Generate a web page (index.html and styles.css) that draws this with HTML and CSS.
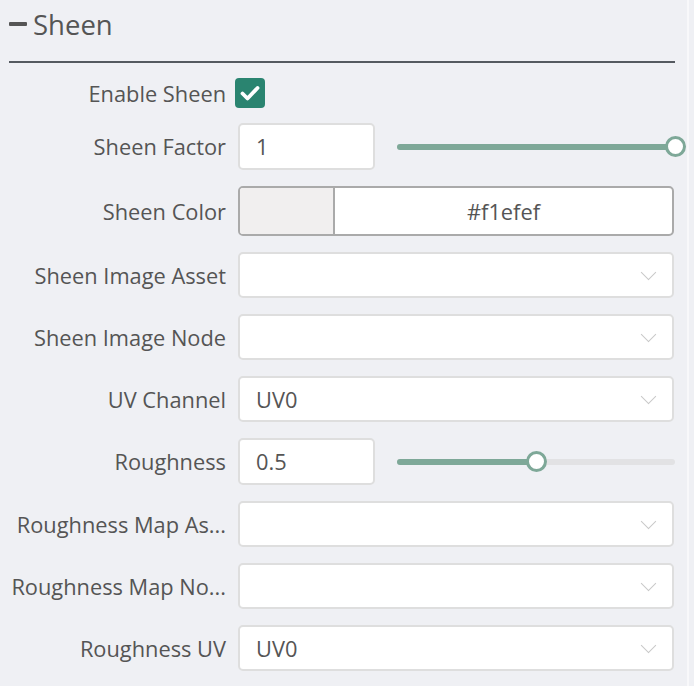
FILE: index.html
```html
<!DOCTYPE html>
<html lang="en">
<head>
  <meta charset="UTF-8">
  <title>Sheen</title>
  <link rel="stylesheet" href="styles.css">
</head>
<body>
  <div class="panel">
    <div class="section-head">
      <span class="collapse"></span>
      <h2>Sheen</h2>
    </div>

    <div class="fields">
      <label class="fld-label enable">Enable Sheen</label>
      <div class="ctl enable">
        <span class="check">
          <svg width="20" height="16" viewBox="0 0 20 16"><path d="M2.5 8.5l5 5L17.5 3" fill="none" stroke="#fff" stroke-width="3.8" stroke-linecap="round" stroke-linejoin="round"/></svg>
        </span>
      </div>

      <label class="fld-label">Sheen Factor</label>
      <div class="ctl num-slider">
        <div class="num-box">1</div>
        <div class="slider">
          <div class="track"></div>
          <div class="fill" style="width: 100%"></div>
          <div class="thumb" style="left: 100%"></div>
        </div>
      </div>

      <label class="fld-label">Sheen Color</label>
      <div class="ctl color-box">
        <div class="swatch"></div>
        <div class="hex">#f1efef</div>
      </div>

      <label class="fld-label">Sheen Image Asset</label>
      <div class="ctl select"><span class="val"></span><span class="chev"></span></div>

      <label class="fld-label">Sheen Image Node</label>
      <div class="ctl select"><span class="val"></span><span class="chev"></span></div>

      <label class="fld-label">UV Channel</label>
      <div class="ctl select"><span class="val">UV0</span><span class="chev"></span></div>

      <label class="fld-label">Roughness</label>
      <div class="ctl num-slider">
        <div class="num-box">0.5</div>
        <div class="slider">
          <div class="track"></div>
          <div class="fill" style="width: 50%"></div>
          <div class="thumb" style="left: 50%"></div>
        </div>
      </div>

      <label class="fld-label">Roughness Map As...</label>
      <div class="ctl select"><span class="val"></span><span class="chev"></span></div>

      <label class="fld-label">Roughness Map No...</label>
      <div class="ctl select"><span class="val"></span><span class="chev"></span></div>

      <label class="fld-label">Roughness UV</label>
      <div class="ctl select"><span class="val">UV0</span><span class="chev"></span></div>
    </div>
  </div>
</body>
</html>
```

FILE: styles.css
```css
body {
  margin: 0;
  background: #eff0f4;
  font-family: "Open Sans", sans-serif;
  color: #555;
}

.panel {
  width: 689px;
  height: 686px;
  border-right: 2px solid #f8f8fa;
  box-sizing: border-box;
}

.section-head {
  display: flex;
  align-items: center;
  gap: 6px;
  margin: 0 12px 0 9px;
  height: 48px;
  border-bottom: 2px solid #555a60;
  padding-bottom: 13px;
}
.section-head h2 {
  margin: 0;
  font-size: 27.5px;
  font-weight: 400;
  color: #555;
}
.collapse {
  width: 18px;
  height: 4px;
  border-radius: 1px;
  background: #555;
}

.fields {
  display: grid;
  grid-template-columns: 226px 436px;
  column-gap: 12px;
  row-gap: 16px;
  align-items: center;
  padding-top: 14px;
}

.fld-label {
  text-align: right;
  font-size: 21.8px;
  white-space: nowrap;
}
.enable {
  margin-top: 1px;
  margin-bottom: -1px;
}

.ctl {
  font-size: 21.8px;
}

.check {
  display: flex;
  align-items: center;
  justify-content: center;
  width: 30px;
  height: 30px;
  border-radius: 4px;
  background: #2a8470;
  margin-left: -3px;
}

.num-slider {
  display: flex;
  align-items: center;
  gap: 22px;
}
.num-box {
  width: 137px;
  height: 47px;
  box-sizing: border-box;
  background: #fff;
  border: 2px solid #dedede;
  border-radius: 5px;
  padding: 0 16px;
  display: flex;
  align-items: center;
}
.slider {
  position: relative;
  flex: 1;
  height: 6px;
  margin-right: -1px;
}
.slider .track {
  height: 6px;
  border-radius: 3px;
  background: #e2e2e4;
}
.slider .fill {
  position: absolute;
  left: 0;
  top: 0;
  height: 6px;
  border-radius: 3px;
  background: #7ea898;
}
.slider .thumb {
  position: absolute;
  top: 3px;
  width: 21px;
  height: 21px;
  box-sizing: border-box;
  margin: -10.5px 0 0 -10.5px;
  border: 3px solid #7ea898;
  border-radius: 50%;
  background: #fff;
}

.color-box {
  display: flex;
  height: 50px;
  box-sizing: border-box;
  border: 2px solid #aaa;
  border-radius: 5px;
  background: #fff;
  overflow: hidden;
}
.swatch {
  width: 93px;
  background: #f1efef;
  border-right: 2px solid #aaa;
}
.hex {
  flex: 1;
  display: flex;
  align-items: center;
  justify-content: center;
}

.select {
  display: flex;
  align-items: center;
  justify-content: space-between;
  height: 46px;
  box-sizing: border-box;
  background: #fff;
  border: 2px solid #dedede;
  border-radius: 5px;
  padding: 0 18px 0 16px;
}
.chev {
  width: 10px;
  height: 10px;
  border-right: 1.5px solid #c8c8c8;
  border-bottom: 1.5px solid #c8c8c8;
  transform: rotate(45deg);
  margin-top: -6px;
}
```
